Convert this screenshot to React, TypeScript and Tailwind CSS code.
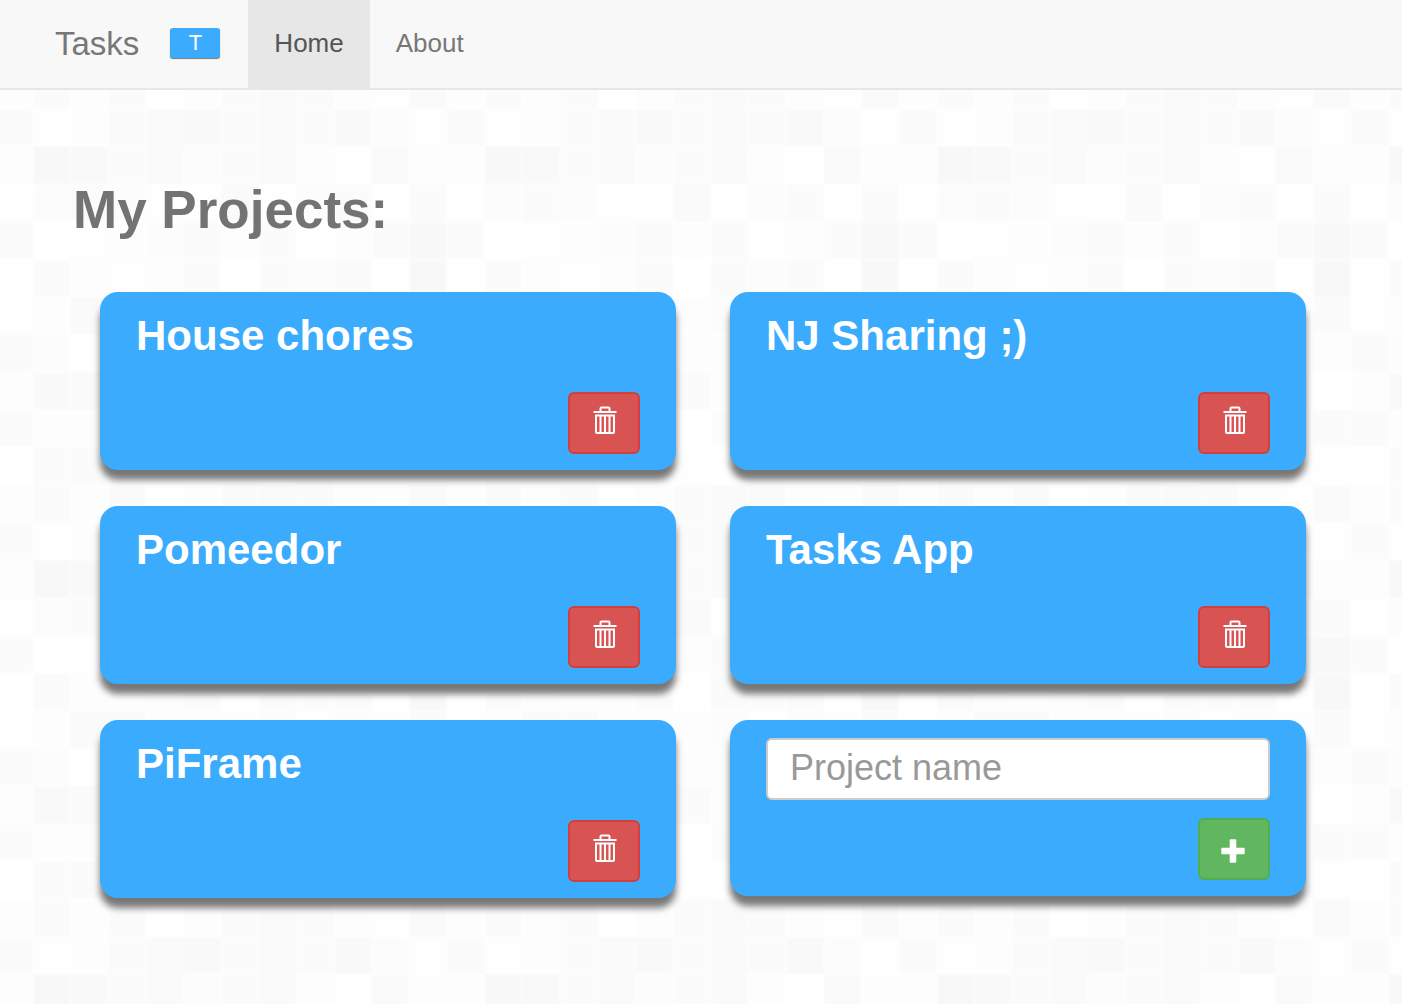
import { useId, useState } from "react";
import type { FormEvent } from "react";

// Last hex digit of each tile's grey (#f_f_f_), twelve columns by eleven rows.
const TILES = [
  "dbdbfdbabdea",
  "bedba9bab9ce",
  "d89bacbadead",
  "ecbceeaecbeb",
  "bfedcbdbedb8",
  "fbdedbfbcbf8",
  "edabdddcecdb",
  "bcedbddddcdd",
  "d9adccbdcdef",
  "bddecdfcdcdb",
  "fbbcddefcdde",
];

const TILE_FILL: Record<string, string> = {
  "8": "#f8f8f8",
  "9": "#f9f9f9",
  a: "#fafafa",
  b: "#fbfbfb",
  c: "#fcfcfc",
  d: "#fdfdfd",
  e: "#fefefe",
  f: "#ffffff",
};

function TiledBackdrop() {
  const id = useId();
  return (
    <svg className="absolute inset-0 -z-10 h-full w-full" aria-hidden="true">
      <defs>
        <pattern
          id={id}
          x="-5"
          y="71"
          width="452"
          height="414"
          viewBox="0 0 452 414"
          preserveAspectRatio="none"
          patternUnits="userSpaceOnUse"
        >
          {TILES.map((row, r) =>
            row.split("").map((shade, c) => {
              const x = Math.round(c * 37.67);
              const y = Math.round(r * 37.64);
              const w = Math.round((c + 1) * 37.67) - x;
              const h = Math.round((r + 1) * 37.64) - y;
              return (
                <g key={`${r}-${c}`}>
                  <rect x={x} y={y} width={w} height={h} fill={TILE_FILL[shade]} />
                  <rect x={x + 1} y={y + 1} width={w - 2} height={h - 2} fill="none" stroke="#fff" strokeOpacity="0.25" strokeWidth="2" />
                </g>
              );
            }),
          )}
        </pattern>
      </defs>
      <rect width="100%" height="100%" fill={`url(#${id})`} />
    </svg>
  );
}

function TrashIcon() {
  return (
    <svg width="24" height="28" viewBox="0 0 24 28" fill="none" stroke="#fff" aria-hidden="true">
      <path d="M7.5 5V2.5q0-1 1-1h7q1 0 1 1V5" strokeWidth="2" />
      <path d="M0.5 6h23" strokeWidth="2" />
      <path d="M3 9.5h18v16.500q0 1-1 1H4q-1 0-1-1z" strokeWidth="2" />
      <path d="M7.500 10v16M12 10v16M16.500 10v16" strokeWidth="2" />
    </svg>
  );
}

function PlusIcon() {
  return (
    <svg width="24" height="24" viewBox="0 0 24 24" fill="#fff" aria-hidden="true">
      <rect x="8.700" y="0.300" width="6.600" height="23.400" rx="1" />
      <rect x="0.300" y="8.700" width="23.400" height="6.600" rx="1" />
    </svg>
  );
}

const CARD =
  "flex flex-col rounded-[18px] bg-[#3babfe] px-9 pt-[18px] pb-4 shadow-[0_10px_7px_#777]";

export default function App() {
  const [projects, setProjects] = useState([
    "House chores",
    "NJ Sharing ;)",
    "Pomeedor",
    "Tasks App",
    "PiFrame",
  ]);
  const [name, setName] = useState("");

  const add = (e: FormEvent) => {
    e.preventDefault();
    if (!name.trim()) return;
    setProjects([...projects, name.trim()]);
    setName("");
  };

  return (
    <div className="relative isolate min-h-screen bg-white font-['Liberation_Sans',Arial,sans-serif]">
      <TiledBackdrop />

      <nav className="flex h-[90px] items-stretch border-b-2 border-[#e7e7e7] bg-[#f8f8f8] pl-[55px] text-[#777]">
        <a href="#" className="mr-7 flex items-center gap-[31px] text-[33px] leading-9">
          Tasks
          <kbd className="mb-[2px] flex h-[30px] w-[50px] items-center justify-center rounded-[3px] bg-[#3babfe] font-['Liberation_Sans',Arial,sans-serif] text-[22px] leading-none text-white shadow-[0_1px_1px_#777]">
            T
          </kbd>
        </a>
        <a
          href="#home"
          aria-current="page"
          className="flex items-center bg-[#e7e7e7] px-[26px] pb-[2px] text-[26px] leading-9 text-[#555]"
        >
          Home
        </a>
        <a href="#about" className="flex items-center px-[26px] pb-[2px] text-[26px] leading-9">
          About
        </a>
      </nav>

      <main className="pt-[90px] pb-20">
        <h1 className="pl-[73px] text-[53px] leading-[60px] font-bold text-[#737373]">My Projects:</h1>

        <ul className="mt-[52px] mr-24 ml-[100px] grid grid-cols-2 items-start gap-x-[54px] gap-y-9">
          {projects.map((project) => (
            <li key={project} className={CARD}>
              <h2 className="text-[42px] leading-[52px] font-bold text-white">{project}</h2>
              <button
                type="button"
                aria-label={`Delete ${project}`}
                onClick={() => setProjects(projects.filter((p) => p !== project))}
                className="mt-[30px] flex h-[62px] w-[72px] items-center justify-center self-end rounded-md border-2 border-[#d1403e] bg-[#d75452] pb-[6px] pl-[2px]"
              >
                <TrashIcon />
              </button>
            </li>
          ))}
          <li>
            <form onSubmit={add} className={CARD}>
              <input
                type="text"
                aria-label="Project name"
                placeholder="Project name"
                value={name}
                onChange={(e) => setName(e.target.value)}
                className="h-[62px] w-full rounded-md border-2 border-[#ccc] bg-white px-[22px] pb-[2px] text-4xl text-[#555] placeholder:text-[#999]"
              />
              <button
                type="submit"
                aria-label="Add project"
                className="mt-[18px] flex h-[62px] w-[72px] items-center justify-center self-end rounded-md border-2 border-[#50ad50] bg-[#60b760] pt-[3px] pr-[2px]"
              >
                <PlusIcon />
              </button>
            </form>
          </li>
        </ul>
      </main>
    </div>
  );
}
